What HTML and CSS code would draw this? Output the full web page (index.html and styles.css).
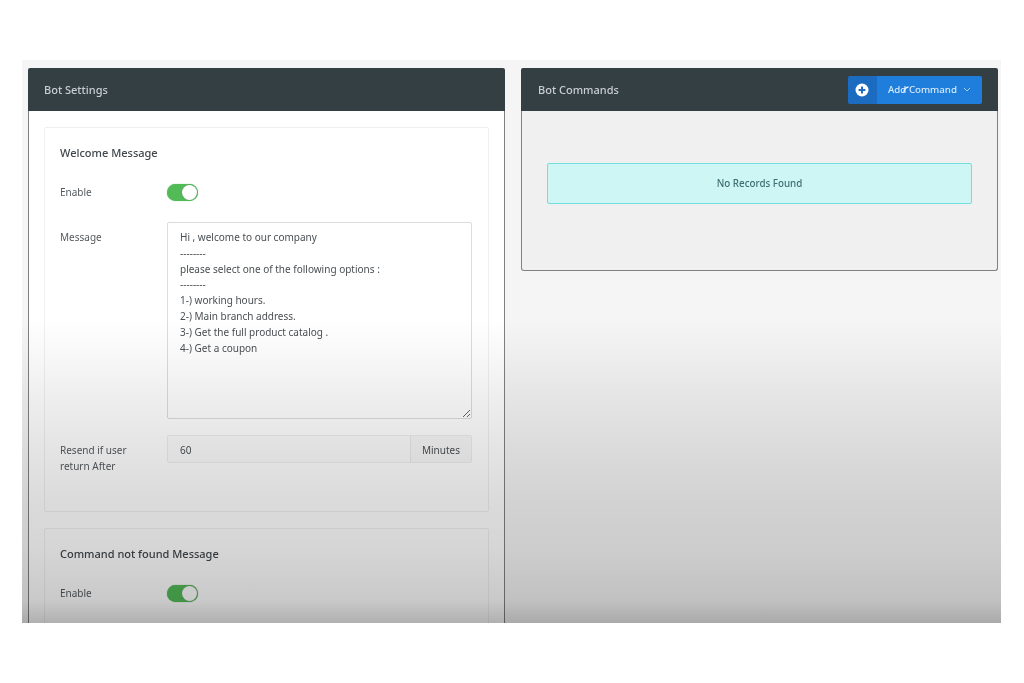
FILE: index.html
```html
<!DOCTYPE html>
<html lang="en">
<head>
<meta charset="utf-8">
<title>Bot Settings</title>
<link rel="stylesheet" href="styles.css">
</head>
<body>
<main class="stage">
  <section class="panel panel-settings">
    <header class="panel-head"><h2>Bot Settings</h2></header>
    <div class="panel-body settings-body">
      <div class="card card-welcome">
        <h3>Welcome Message</h3>
        <div class="row row-toggle">
          <span class="label">Enable</span>
          <span class="toggle"><span class="knob"></span></span>
        </div>
        <div class="row row-message">
          <label class="label" for="msg">Message</label>
          <textarea id="msg" class="message" spellcheck="false">Hi , welcome to our company
--------
please select one of the following options :
--------
1-) working hours.
2-) Main branch address.
3-) Get the full product catalog .
4-) Get a coupon</textarea>
        </div>
        <div class="row row-resend">
          <span class="label">Resend if user<br>return After</span>
          <div class="input-group">
            <span class="input-value">60</span>
            <span class="input-addon">Minutes</span>
          </div>
        </div>
      </div>
      <div class="card card-notfound">
        <h3>Command not found Message</h3>
        <div class="row row-toggle">
          <span class="label">Enable</span>
          <span class="toggle"><span class="knob"></span></span>
        </div>
      </div>
    </div>
  </section>
  <section class="panel panel-commands">
    <header class="panel-head">
      <h2>Bot Commands</h2>
      <div class="add-btn">
        <span class="add-icon">
          <svg width="14" height="14" viewBox="0 0 14 14" aria-hidden="true"><circle cx="7" cy="7" r="6.5" fill="#fff"/><path d="M7 3.6v6.8M3.6 7h6.8" stroke="#1b6cc0" stroke-width="2"/></svg>
        </span>
        <span class="add-text">Add Command
          <svg class="chev" width="8" height="5" viewBox="0 0 8 5" aria-hidden="true"><path d="M1 1l3 3 3-3" fill="none" stroke="#a9cdf3" stroke-width="1"/></svg>
        </span>
        <svg class="cursor-mark" width="6" height="7" viewBox="0 0 6 7" aria-hidden="true"><path d="M1 6C1 3 3 1.500 5.500 1" fill="none" stroke="#e8f2fc" stroke-width="1.300"/></svg>
      </div>
    </header>
    <div class="panel-body commands-body">
      <div class="alert">No Records Found</div>
    </div>
  </section>
  <div class="shade"></div>
</main>
</body>
</html>
```

FILE: styles.css
```css
* { box-sizing: border-box; }
html, body { margin: 0; background: #fff; }
body {
  height: 683px;
  padding: 60px 23px 0 22px;
  overflow: hidden;
  font-family: "Noto Sans", "Open Sans", sans-serif;
  font-size: 10px;
  color: #4a4f53;
}
.stage {
  position: relative;
  display: flex;
  align-items: flex-start;
  gap: 16px;
  height: 563px;
  padding: 8px 3px 0 6px;
  overflow: hidden;
  background: #f5f5f5;
  filter: blur(0.45px);
}
.shade {
  position: absolute;
  inset: 0;
  background: linear-gradient(to bottom,
    rgba(0,0,0,0) 46%,
    rgba(0,0,0,.03) 53%,
    rgba(0,0,0,.065) 60%,
    rgba(0,0,0,.105) 69%,
    rgba(0,0,0,.14) 78%,
    rgba(0,0,0,.165) 87%,
    rgba(0,0,0,.21) 96%,
    rgba(0,0,0,.31) 100%);
  pointer-events: none;
}
.panel {
  width: 477px;
  flex: none;
  border-radius: 2px 2px 0 0;
}
.panel-settings { height: 600px; }
.panel-commands { height: 203px; border-radius: 3px; }
.panel-head {
  display: flex;
  align-items: center;
  justify-content: space-between;
  height: 43px;
  padding: 0 16px;
  background: #343f43;
  border-radius: 2px 2px 0 0;
}
.panel-commands .panel-head { padding-left: 17px; }
.panel-head h2 {
  margin: 0;
  font-size: 11px;
  font-weight: 500;
  color: #c9ced1;
}
.panel-body {
  border: 1px solid #808080;
  border-top: 0;
}
.settings-body {
  height: 557px;
  padding: 16px 15px;
  background: #fff;
}
.commands-body {
  height: 160px;
  padding: 52px 25px 0;
  background: #f0f0f0;
  border-radius: 0 0 3px 3px;
}
.card {
  border: 1px solid #efefef;
  border-radius: 2px;
  padding: 17px 15px 0;
  background: #fff;
}
.card-welcome { height: 385px; margin-bottom: 16px; }
.card-notfound { height: 120px; }
.card h3 {
  margin: 0 0 23px;
  font-size: 11px;
  line-height: 16px;
  font-weight: 500;
  color: #40464a;
}
.row { display: flex; align-items: flex-start; }
.label {
  flex: none;
  width: 107px;
  line-height: 16px;
  color: #555a5e;
}
.row-toggle { align-items: center; height: 17px; margin-bottom: 21px; }
.row-toggle .label { padding-bottom: 1px; }
.toggle {
  display: flex;
  justify-content: flex-end;
  width: 31px;
  height: 17px;
  border-radius: 9px;
  background: #52bb57;
  box-shadow: 0 0 1px #52bb57;
}
.knob {
  width: 15px;
  height: 15px;
  margin: 1px;
  border-radius: 50%;
  background: #fff;
  box-shadow: 0 0 1px #777;
}
.row-message { margin-bottom: 16px; }
.row-message .label { padding-top: 7px; }
.message {
  display: block;
  width: 305px;
  height: 197px;
  padding: 7px 12px;
  border: 1px solid #dcdcdc;
  border-radius: 2px;
  outline: none;
  background: #fff;
  font: inherit;
  line-height: 15.800px;
  color: #4a4f53;
  resize: vertical;
}
.row-resend .label { padding-top: 7px; }
.input-group {
  display: flex;
  width: 305px;
  height: 28px;
  border: 1px solid #ededed;
  border-radius: 2px;
  background: #fbfbfb;
  line-height: 28px;
}
.input-value { flex: 1; padding-left: 12px; }
.input-addon {
  padding: 0 11px;
  border-left: 1px solid #e8e8e8;
  background: #f7f7f7;
}
.add-btn {
  position: relative;
  display: flex;
  width: 134px;
  height: 28px;
  border-radius: 2px;
  overflow: hidden;
  color: #d6e8fb;
}
.add-icon {
  display: flex;
  align-items: center;
  justify-content: center;
  width: 29px;
  padding-right: 1px;
  background: #1b6cc0;
}
.add-text {
  flex: 1;
  display: flex;
  align-items: center;
  gap: 6px;
  padding-left: 11px;
  background: #1f7edb;
  font-size: 9.700px;
  font-weight: 500;
  white-space: nowrap;
}
.cursor-mark {
  position: absolute;
  left: 55px;
  top: 10px;
}
.alert {
  height: 41px;
  border: 1px solid #74dde0;
  border-radius: 2px;
  background: #cdf6f5;
  text-align: center;
  line-height: 39px;
  font-size: 9.800px;
  color: #3f6e72;
  font-weight: 500;
}
```
